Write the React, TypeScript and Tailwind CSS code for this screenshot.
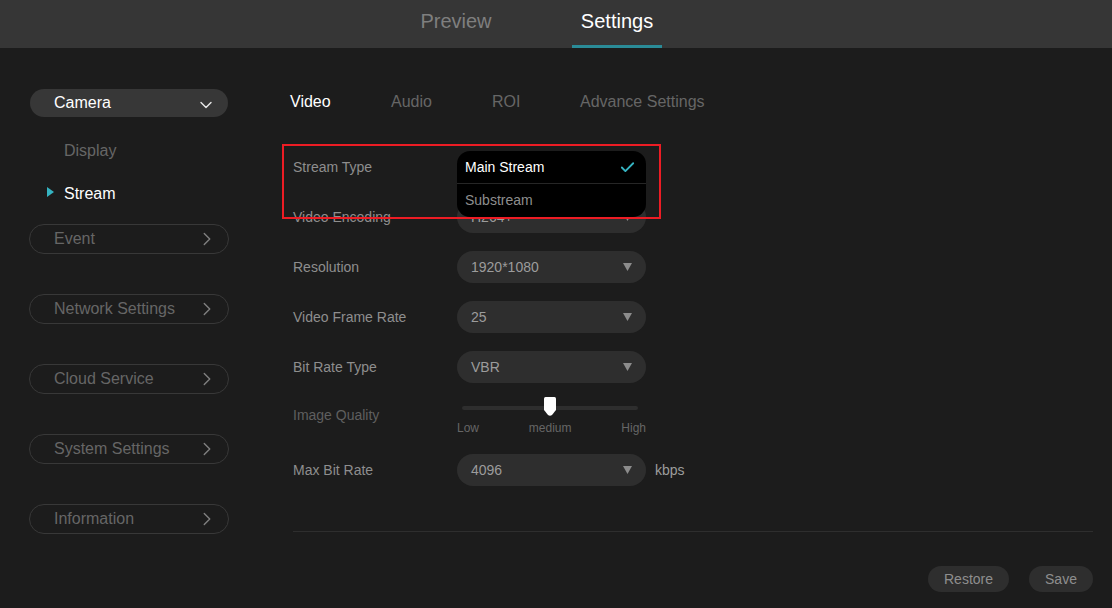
import { Check, ChevronDown, ChevronRight } from 'lucide-react';

const groups = ['Event', 'Network Settings', 'Cloud Service', 'System Settings', 'Information'];

const Caret = () => (
  <svg width="9" height="8" viewBox="0 0 9 8" className="ml-auto">
    <path d="M0 0H9L4.500 8Z" fill="#8c8c8c" />
  </svg>
);

const Select = ({ value }: { value: string }) => (
  <div className="flex h-8 w-[189px] items-center rounded-2xl bg-[#2e2e2e] pl-[14px] pr-[14px] text-[14px] text-[#9c9c9c]">
    <span>{value}</span>
    <Caret />
  </div>
);

const Row = ({ label, children }: { label: string; children: React.ReactNode }) => (
  <div className="flex h-8 items-center">
    <div className="w-[164px] text-[14px] text-[#8e8e8e]">{label}</div>
    {children}
  </div>
);

const App = () => {
  return (
    <div className="flex h-[608px] w-[1112px] flex-col overflow-hidden bg-[#1c1c1c] font-['Liberation_Sans',Arial,sans-serif]">
      {/* Top bar */}
      <div className="flex h-12 shrink-0 bg-[#363636] pl-[411px] text-[20px]">
        <div className="flex w-[90px] items-start justify-center pt-[6px] text-[#7f7f7f]">Preview</div>
        <div className="ml-[71px] flex w-[90px] items-start justify-center border-b-[3px] border-[#2a8b97] pt-[6px] text-white">
          Settings
        </div>
      </div>

      <div className="flex min-h-0 flex-1">
        {/* Sidebar */}
        <div className="ml-[29px] mt-[41px] w-[200px] shrink-0 text-[16px]">
          <div className="mx-px flex h-[28px] items-center rounded-2xl bg-[#373737] pl-6 pr-[12px] text-white">
            <span>Camera</span>
            <ChevronDown size={20} strokeWidth={1.7} className="ml-auto mt-[3px] text-[#e6e6e6]" />
          </div>
          <div className="mt-[25px] pl-[35px] leading-[18px] text-[#666666]">Display</div>
          <div className="relative mt-[25px] pl-[35px] leading-[18px] text-white">
            <span className="absolute left-[18px] top-[2px] h-0 w-0 border-y-[5px] border-l-[7px] border-y-transparent border-l-[#35b3c1]" />
            Stream
          </div>
          <div className="mt-[21px] flex flex-col gap-10">
            {groups.map((g) => (
              <div
                key={g}
                className="flex h-[30px] items-center rounded-2xl border border-[#383838] pl-6 pr-[10px] text-[#666666]"
              >
                <span>{g}</span>
                <ChevronRight size={22} strokeWidth={1.5} className="ml-auto text-[#808080]" />
              </div>
            ))}
          </div>
        </div>

        {/* Content */}
        <div className="ml-[61px] mr-[19px] flex min-w-0 flex-1 flex-col">
          <div className="mt-[45px] flex h-[18px] items-center text-[16px] leading-[18px] text-[#666666]">
            <span className="w-[101px] text-white">Video</span>
            <span className="w-[101px]">Audio</span>
            <span className="w-[88px]">ROI</span>
            <span>Advance Settings</span>
          </div>

          <div className="relative mt-[40px] pl-[3px]">
            <div className="flex flex-col gap-[18px]">
              <Row label="Stream Type">
                <div className="h-8 w-[189px]" />
              </Row>
              <Row label="Video Encoding">
                <Select value="H264+" />
              </Row>
              <Row label="Resolution">
                <Select value="1920*1080" />
              </Row>
              <Row label="Video Frame Rate">
                <Select value="25" />
              </Row>
              <Row label="Bit Rate Type">
                <Select value="VBR" />
              </Row>
            </div>

            <div className="mt-[14px] flex h-[53px]">
              <div className="w-[164px] pt-[10px] text-[14px] leading-4 text-[#5f5f5f]">Image Quality</div>
              <div className="w-[189px]">
                <div className="relative mx-[5px] mt-[9px] h-[4px] w-[176px] rounded-sm bg-[#2e2e2e]">
                  <svg width="12" height="19" viewBox="0 0 12 19" className="absolute left-[82px] top-[-9px]">
                    <path d="M1.500 0H10.500Q12 0 12 1.500V13L8 18Q6 19.500 4 18L0 13V1.500Q0 0 1.500 0Z" fill="#ffffff" />
                  </svg>
                </div>
                <div className="mt-[11px] flex justify-between text-[12px] leading-[14px] text-[#666666]">
                  <span>Low</span>
                  <span>medium</span>
                  <span>High</span>
                </div>
              </div>
            </div>

            <div className="mt-[4px]">
              <Row label="Max Bit Rate">
                <Select value="4096" />
                <span className="ml-[9px] text-[14px] text-[#9c9c9c]">kbps</span>
              </Row>
            </div>

            {/* Open dropdown, over the Video Encoding row */}
            <div className="absolute left-[167px] top-0 w-[189px] overflow-hidden rounded-[13px] bg-black text-[14px]">
              <div className="flex h-[33px] items-center border-b border-[#262626] pl-2 pr-[10px] text-white">
                <span>Main Stream</span>
                <Check size={17} strokeWidth={2.6} className="ml-auto text-[#35b3c1]" />
              </div>
              <div className="flex h-[33px] items-center pl-2 text-[#8e8e8e]">Substream</div>
            </div>

            {/* Red annotation box */}
            <div className="pointer-events-none absolute left-[-8px] top-[-7px] h-[75px] w-[379px] border-2 border-[#ed1c24]" />
          </div>

          <div className="ml-[3px] mt-[45px] border-t border-[#2e2e2e]" />

          <div className="mt-[34px] flex justify-end gap-5 text-[14px] text-[#8e8e8e]">
            <div className="flex h-[26px] w-[81px] items-center justify-center rounded-[13px] bg-[#2e2e2e]">Restore</div>
            <div className="flex h-[26px] w-[64px] items-center justify-center rounded-[13px] bg-[#2e2e2e]">Save</div>
          </div>
        </div>
      </div>
    </div>
  );
};

export default App;
